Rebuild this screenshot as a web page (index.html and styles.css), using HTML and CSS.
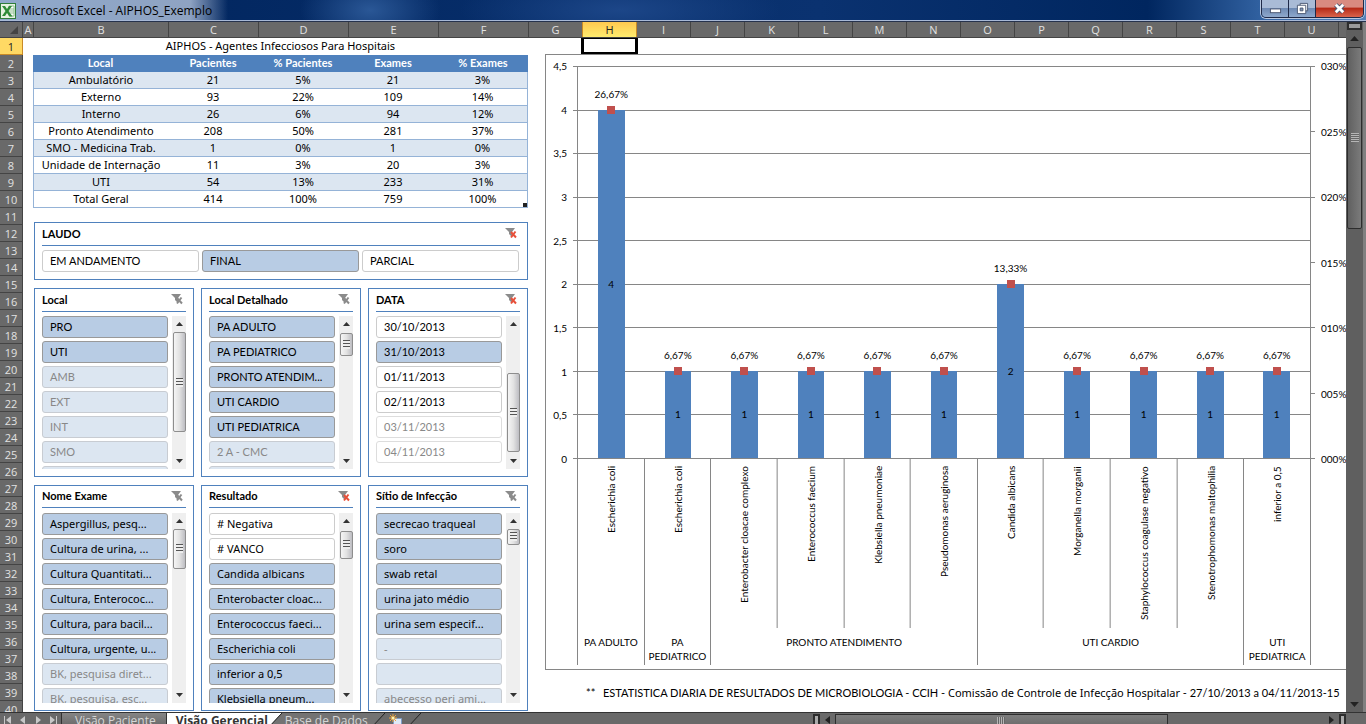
FILE: index.html
```html
<!DOCTYPE html>
<html lang="pt-BR">
<head>
<meta charset="utf-8">
<title>Microsoft Excel - AIPHOS_Exemplo</title>
<link rel="stylesheet" href="styles.css">
</head>
<body>
<svg class="defs" aria-hidden="true">
  <symbol id="clear" viewBox="0 0 12 12">
    <path class="funnel" d="M0 1h10L7 5v5L4 7V5z"/>
    <path class="cross" d="M6 5l5 5.500M10.500 4.500l-4.500 6"/>
  </symbol>
  <symbol id="up" viewBox="0 0 7 4"><path d="M0 4L3.500 0L7 4z"/></symbol>
  <symbol id="down" viewBox="0 0 7 4"><path d="M0 0L3.500 4L7 0z"/></symbol>
</svg>
<div class="app">
  <header class="titlebar">
    <svg class="logo" viewBox="0 0 16 16"><rect x=".5" y=".5" width="15" height="15" fill="#e6f2e2" stroke="#2f7d3b"/><path d="M9 3h5v10H9z" fill="#fff" stroke="#8dbf8f"/><path d="M10 6h4M10 8h4M10 10h4" stroke="#8dbf8f"/><path d="M2 3h3l2 3 2-3h3L8.500 8l4 5.500h-3L7 10l-2 3H2l3.500-5z" fill="#2e8b37"/></svg>
    <h1 class="title">Microsoft Excel - AIPHOS_Exemplo</h1>
    <div class="winbtns">
      <button class="win" aria-label="Minimizar"><svg viewBox="0 0 14 14"><rect x="1.500" y="7.500" width="11" height="4" fill="#fff" stroke="#4a5670"/></svg></button>
      <button class="win" aria-label="Restaurar"><svg viewBox="0 0 14 14"><path d="M4.500 1.500h8v8h-8z" fill="#fff" stroke="#4a5670"/><path d="M1.500 3.500h9v9h-9z" fill="#fff" stroke="#4a5670"/><path d="M4.500 6.500h3v3h-3z" fill="#8397b5" stroke="#4a5670"/></svg></button>
      <button class="win close" aria-label="Fechar"><svg viewBox="0 0 14 14"><path d="M3 3l8 8M11 3l-8 8" stroke="#4a5670" stroke-width="5"/><path d="M3 3l8 8M11 3l-8 8" stroke="#fff" stroke-width="3"/></svg></button>
    </div>
  </header>

  <div class="workbook">
    <main class="sheet">
      <div class="colheads">
        <button class="corner" aria-label="Selecionar tudo"><svg viewBox="0 0 8 8"><path d="M8 0v8H0z" fill="#444"/></svg></button>
        <span class="ca">A</span><span class="cb">B</span><span class="cc">C</span><span class="cc">D</span><span class="cc">E</span><span class="cc">F</span><span>G</span><span class="on">H</span><span>I</span><span>J</span><span>K</span><span>L</span><span>M</span><span>N</span><span>O</span><span>P</span><span>Q</span><span>R</span><span>S</span><span>T</span><span>U</span><span></span>
      </div>
      <div class="sheetbody">
        <div class="rowheads">
          <span class="on">1</span><span>2</span><span>3</span><span>4</span><span>5</span><span>6</span><span>7</span><span>8</span><span>9</span><span>10</span><span>11</span><span>12</span><span>13</span><span>14</span><span>15</span><span>16</span><span>17</span><span>18</span><span>19</span><span>20</span><span>21</span><span>22</span><span>23</span><span>24</span><span>25</span><span>26</span><span>27</span><span>28</span><span>29</span><span>30</span><span>31</span><span>32</span><span>33</span><span>34</span><span>35</span><span>36</span><span>37</span><span>38</span><span>39</span><span>40</span>
        </div>
        <section class="left">
          <table class="data">
            <caption>AIPHOS - Agentes Infecciosos Para Hospitais</caption>
            <thead><tr><th class="wide">Local</th><th>Pacientes</th><th>% Pacientes</th><th>Exames</th><th>% Exames</th></tr></thead>
            <tbody>
              <tr><td>Ambulatório</td><td>21</td><td>5%</td><td>21</td><td>3%</td></tr>
              <tr><td>Externo</td><td>93</td><td>22%</td><td>109</td><td>14%</td></tr>
              <tr><td>Interno</td><td>26</td><td>6%</td><td>94</td><td>12%</td></tr>
              <tr><td>Pronto Atendimento</td><td>208</td><td>50%</td><td>281</td><td>37%</td></tr>
              <tr><td>SMO - Medicina Trab.</td><td>1</td><td>0%</td><td>1</td><td>0%</td></tr>
              <tr><td>Unidade de Internação</td><td>11</td><td>3%</td><td>20</td><td>3%</td></tr>
              <tr><td>UTI</td><td>54</td><td>13%</td><td>233</td><td>31%</td></tr>
              <tr><td>Total Geral</td><td>414</td><td>100%</td><td>759</td><td class="last">100%</td></tr>
            </tbody>
          </table>

          <div class="slicers">
            <section class="slicer full">
              <header><h2>LAUDO</h2><button class="clr red" aria-label="Limpar filtro"><svg><use href="#clear"/></svg></button></header>
              <div class="row"><button class="it off">EM ANDAMENTO</button><button class="it">FINAL</button><button class="it off">PARCIAL</button></div>
            </section>

            <section class="slicer mid">
              <header><h2>Local</h2><button class="clr" aria-label="Limpar filtro"><svg><use href="#clear"/></svg></button></header>
              <div class="list"><div class="items"><button class="it">PRO</button><button class="it">UTI</button><button class="it dim">AMB</button><button class="it dim">EXT</button><button class="it dim">INT</button><button class="it dim">SMO</button><button class="it dim"></button></div>
              <div class="bar"><svg><use href="#up"/></svg><div class="track"><i class="thumb" style="top:0%;height:83%"></i></div><svg><use href="#down"/></svg></div></div>
            </section>
            <section class="slicer mid">
              <header><h2>Local Detalhado</h2><button class="clr" aria-label="Limpar filtro"><svg><use href="#clear"/></svg></button></header>
              <div class="list"><div class="items"><button class="it">PA ADULTO</button><button class="it">PA PEDIATRICO</button><button class="it">PRONTO ATENDIM...</button><button class="it">UTI CARDIO</button><button class="it">UTI PEDIATRICA</button><button class="it dim">2 A - CMC</button><button class="it dim"></button></div>
              <div class="bar"><svg><use href="#up"/></svg><div class="track"><i class="thumb" style="top:1%;height:19%"></i></div><svg><use href="#down"/></svg></div></div>
            </section>
            <section class="slicer mid">
              <header><h2>DATA</h2><button class="clr red" aria-label="Limpar filtro"><svg><use href="#clear"/></svg></button></header>
              <div class="list"><div class="items"><button class="it off">30/10/2013</button><button class="it">31/10/2013</button><button class="it off">01/11/2013</button><button class="it off">02/11/2013</button><button class="it off faint">03/11/2013</button><button class="it off faint">04/11/2013</button></div>
              <div class="bar"><svg><use href="#up"/></svg><div class="track"><i class="thumb" style="top:34%;height:65%"></i></div><svg><use href="#down"/></svg></div></div>
            </section>

            <section class="slicer low">
              <header><h2>Nome Exame</h2><button class="clr" aria-label="Limpar filtro"><svg><use href="#clear"/></svg></button></header>
              <div class="list"><div class="items"><button class="it">Aspergillus, pesq...</button><button class="it">Cultura de urina, ...</button><button class="it">Cultura Quantitati...</button><button class="it">Cultura, Enterococ...</button><button class="it">Cultura, para bacil...</button><button class="it">Cultura, urgente, u...</button><button class="it dim">BK, pesquisa diret...</button><button class="it dim">BK, pesquisa, esc...</button></div>
              <div class="bar"><svg><use href="#up"/></svg><div class="track"><i class="thumb" style="top:0%;height:25%"></i></div><svg><use href="#down"/></svg></div></div>
            </section>
            <section class="slicer low">
              <header><h2>Resultado</h2><button class="clr red" aria-label="Limpar filtro"><svg><use href="#clear"/></svg></button></header>
              <div class="list"><div class="items"><button class="it off"># Negativa</button><button class="it off"># VANCO</button><button class="it">Candida albicans</button><button class="it">Enterobacter cloac...</button><button class="it">Enterococcus faeci...</button><button class="it">Escherichia coli</button><button class="it">inferior a 0,5</button><button class="it">Klebsiella pneum...</button></div>
              <div class="bar"><svg><use href="#up"/></svg><div class="track"><i class="thumb" style="top:1%;height:18%"></i></div><svg><use href="#down"/></svg></div></div>
            </section>
            <section class="slicer low">
              <header><h2>Sítio de Infecção</h2><button class="clr" aria-label="Limpar filtro"><svg><use href="#clear"/></svg></button></header>
              <div class="list"><div class="items"><button class="it">secrecao traqueal</button><button class="it">soro</button><button class="it">swab retal</button><button class="it">urina jato médio</button><button class="it">urina sem especif...</button><button class="it dim">-</button><button class="it dim"></button><button class="it dim">abecesso peri ami...</button></div>
              <div class="bar"><svg><use href="#up"/></svg><div class="track"><i class="thumb" style="top:0%;height:10%"></i></div><svg><use href="#down"/></svg></div></div>
            </section>
          </div>
        </section>

        <section class="right">
          <div class="cellrow"><div class="selected"></div></div>
          <div class="chart">
            <div class="axis yl"><span>4,5</span><span>4</span><span>3,5</span><span>3</span><span>2,5</span><span>2</span><span>1,5</span><span>1</span><span>0,5</span><span>0</span></div>
            <div class="plot">
              <div class="lines"><i></i><i></i><i></i><i></i><i></i><i></i><i></i><i></i><i></i><i></i></div>
              <div class="ticks"><i></i><i></i><i></i><i></i><i></i><i></i><i></i></div>
              <div class="col"><span class="pct">26,67%</span><div class="val" style="height:88.890%">4</div></div>
              <div class="col"><span class="pct">6,67%</span><div class="val" style="height:22.220%">1</div></div>
              <div class="col"><span class="pct">6,67%</span><div class="val" style="height:22.220%">1</div></div>
              <div class="col"><span class="pct">6,67%</span><div class="val" style="height:22.220%">1</div></div>
              <div class="col"><span class="pct">6,67%</span><div class="val" style="height:22.220%">1</div></div>
              <div class="col"><span class="pct">6,67%</span><div class="val" style="height:22.220%">1</div></div>
              <div class="col"><span class="pct">13,33%</span><div class="val" style="height:44.440%">2</div></div>
              <div class="col"><span class="pct">6,67%</span><div class="val" style="height:22.220%">1</div></div>
              <div class="col"><span class="pct">6,67%</span><div class="val" style="height:22.220%">1</div></div>
              <div class="col"><span class="pct">6,67%</span><div class="val" style="height:22.220%">1</div></div>
              <div class="col"><span class="pct">6,67%</span><div class="val" style="height:22.220%">1</div></div>
            </div>
            <div class="axis yr"><span>030%</span><span>025%</span><span>020%</span><span>015%</span><span>010%</span><span>005%</span><span>000%</span></div>
            <div class="cats">
              <div class="group one"><div class="names"><span>Escherichia coli</span></div><b>PA ADULTO</b></div>
              <div class="group one"><div class="names"><span>Escherichia coli</span></div><b>PA<br>PEDIATRICO</b></div>
              <div class="group four"><div class="names"><span>Enterobacter cloacae complexo</span><span>Enterococcus faecium</span><span>Klebsiella pneumoniae</span><span>Pseudomonas aeruginosa</span></div><b>PRONTO ATENDIMENTO</b></div>
              <div class="group four"><div class="names"><span>Candida albicans</span><span>Morganella morganii</span><span>Staphylococcus coagulase negativo</span><span>Stenotrophomonas maltophilia</span></div><b>UTI CARDIO</b></div>
              <div class="group one"><div class="names"><span>inferior a 0,5</span></div><b>UTI<br>PEDIATRICA</b></div>
            </div>
          </div>
          <p class="note"><span class="mark">**</span>ESTATISTICA DIARIA DE RESULTADOS DE MICROBIOLOGIA - CCIH - <span class="text">Comissão de Controle de Infecção Hospitalar</span> - 27/10/2013 a 04/11/2013-15</p>
        </section>
      </div>
    </main>
    <div class="vscroll">
      <i class="split"></i>
      <svg class="arrow"><use href="#up"/></svg>
      <div class="vtrack"><i class="vthumb"></i></div>
      <svg class="arrow"><use href="#down"/></svg>
    </div>
  </div>

  <footer class="tabbar">
    <div class="nav">
      <button aria-label="Primeira"><svg viewBox="0 0 8 8"><path d="M0 0h1v8H0zM7 0v8L2 4z"/></svg></button>
      <button aria-label="Anterior"><svg viewBox="0 0 8 8"><path d="M6 0v8L1 4z"/></svg></button>
      <button aria-label="Próxima"><svg viewBox="0 0 8 8"><path d="M2 0v8l5-4z"/></svg></button>
      <button aria-label="Última"><svg viewBox="0 0 8 8"><path d="M1 0v8l5-4zM7 0h1v8H7z"/></svg></button>
    </div>
    <button class="tab">Visão Paciente</button>
    <button class="tab active">Visão Gerencial</button>
    <svg class="slant" viewBox="0 0 14 15"><path d="M0 0h14L0 15z" fill="#fff"/><path d="M14 0L0 15h14z" fill="#737373"/><path d="M14 0L0 15" stroke="#222"/></svg>
    <button class="tab">Base de Dados</button>
    <svg class="slant" viewBox="0 0 14 15"><path d="M0 0h14L0 15z" fill="#737373"/><path d="M14 0L0 15" stroke="#222"/></svg>
    <button class="new" aria-label="Inserir planilha"><svg viewBox="0 0 14 14"><path d="M4.500 4.500h8v7h-8z" fill="#dfe9f7" stroke="#7f9dc8"/><path d="M4 0v8M0 4h8M1 1l6 6M7 1L1 7" stroke="#f0a437"/><circle cx="4" cy="4" r="1.500" fill="#fff2b0"/></svg></button>
    <svg class="slant" viewBox="0 0 14 15"><path d="M14 0L0 15" stroke="#222"/></svg>
    <div class="hscroll">
      <i class="hsplit"></i>
      <svg class="harrow" viewBox="0 0 5 8"><path d="M5 0v8L0 4z"/></svg>
      <div class="htrack"><i class="hthumb"></i></div>
      <svg class="harrow" viewBox="0 0 5 8"><path d="M0 0v8l5-4z"/></svg>
      <i class="hsplit"></i>
    </div>
  </footer>
</div>
</body>
</html>
```
FILE: styles.css
```css
* { box-sizing: border-box; }
body { margin: 0; font-family: Lato, "Open Sans", sans-serif; font-size: 11px; color: #000; }
button { font: inherit; color: inherit; margin: 0; padding: 0; border: 0; background: none; }
h1, h2, p { margin: 0; font-size: inherit; }
.defs { position: absolute; width: 0; height: 0; }
.app { height: 100vh; overflow: hidden; display: flex; flex-direction: column; background: #696969; }

/* Title bar */
.titlebar {
  flex: 0 0 22px; display: flex; align-items: center; padding: 0 2px 0 0; gap: 5px;
  border-bottom: 1px solid #26324c; box-shadow: inset 0 -1px #a7b8d6;
  background:
    linear-gradient(90deg, #8fa9cb 0, #8fa3c2 190px, rgba(120,145,185,0) 228px),
    radial-gradient(ellipse 70px 40px at 370px 10px, #2a5796, rgba(20,60,120,0)),
    radial-gradient(ellipse 160px 40px at 620px 10px, #1c4688, rgba(20,60,120,0)),
    linear-gradient(90deg, #00245c 0, #0a3270 60%, #00265f 84%, #3566a6 93%, #5480b8 100%);
}
.logo { width: 16px; height: 16px; }
.title { flex: 1; font: 12px/20px "Open Sans", sans-serif; }
.winbtns { display: flex; align-self: flex-start; height: 18px; border: 1px solid #1f2a48; border-top: 0; border-radius: 0 0 5px 5px; overflow: hidden; box-shadow: 0 0 0 1px #b8c8e0; }
.win { width: 27px; display: flex; align-items: center; justify-content: center; border-right: 1px solid #1f2a48; background: linear-gradient(#a9bbd6 0 45%, #6f8bb4 50%, #8ea8cc); }
.win svg { width: 13px; height: 13px; }
.close { width: 47px; border: 0; background: linear-gradient(#d98b80 0 40%, #b72c19 50%, #d9644c); }

/* Headings of the grid */
.workbook { flex: 1; min-height: 0; display: flex; }
.sheet { flex: 1; min-width: 0; display: flex; flex-direction: column; background: #fff; }
.colheads { flex: 0 0 16px; display: flex; overflow: hidden; background: #696969; border-bottom: 1px solid #444; font: 11px/15px "Open Sans", sans-serif; color: #e2e2e2; }
.colheads span { flex: 0 0 54px; text-align: center; border-right: 1px solid #444; }
.colheads .corner { flex: 0 0 23px; display: flex; align-items: flex-end; justify-content: flex-end; padding: 0 4px 3px 0; border-right: 1px solid #444; }
.corner svg { width: 8px; height: 8px; }
.colheads .ca { flex-basis: 11px; }
.colheads .cb { flex-basis: 135px; }
.colheads .cc { flex-basis: 90px; }
.colheads .on, .rowheads .on { background: #ffd964; color: #222; border-color: #c98a26; }
.colheads .on { box-shadow: -1px 0 #c98a26; background: linear-gradient(#ffc84f, #ffec6e); }
.sheetbody { flex: 1; min-height: 0; display: flex; overflow: hidden; }
.rowheads { flex: 0 0 23px; background: #696969; font: 11px/17px "Open Sans", sans-serif; color: #e2e2e2; text-align: center; }
.rowheads span { display: block; height: 17px; border-bottom: 1px solid #444; border-right: 1px solid #444; }

/* Table */
.left { flex: 0 0 505px; padding-left: 10px; }
.data { width: 100%; table-layout: fixed; border-collapse: separate; border-spacing: 0; text-align: center; line-height: 16px; font-family: "Noto Sans", sans-serif; }
.data caption { height: 17px; line-height: 16px; }
.data th, .data td { padding: 0; height: 17px; border-bottom: 1px solid #95b3d7; white-space: nowrap; }
.data th { background: #4f81bd; color: #fff; border-color: #4f81bd; font-family: Lato, sans-serif; }
.data .wide { width: 135px; }
.data td:first-child { border-left: 1px solid #95b3d7; }
.data td:last-child { border-right: 1px solid #95b3d7; }
.data tbody tr:nth-child(odd) { background: #dce6f1; }
.data .last { background: linear-gradient(#222, #222) right bottom / 4px 4px no-repeat; }

/* Slicers */
.slicers { display: grid; grid-template-columns: repeat(3, 1fr); column-gap: 7px; row-gap: 8px; padding: 14px 0 0 1px; }
.slicer { border: 1px solid #4f81bd; padding: 0 7px 7px; min-width: 0; }
.full { grid-column: 1 / -1; }
.slicer header { display: flex; justify-content: space-between; align-items: center; height: 23px; border-bottom: 1px solid #4f81bd; margin-bottom: 4px; padding: 0 3px 2px 0; }
.low header { height: 22px; margin-bottom: 5px; }
.slicer h2 { font-weight: 700; }
.clr { width: 12px; height: 12px; display: flex; --x: #8b8b8b; }
.clr svg { width: 12px; height: 12px; }
.clr.red { --x: #e8503a; }
.funnel { fill: #8b8b8b; }
.cross { stroke: var(--x); stroke-width: 2; fill: none; }
.row { display: grid; grid-template-columns: repeat(3, 1fr); gap: 3px; }
.full .row { padding-right: 1px; }
.list { display: flex; gap: 4px; height: 153px; overflow: hidden; }
.low .list { height: 190px; }
.items { flex: 1; min-width: 0; display: flex; flex-direction: column; gap: 3px; }
.it { flex: 0 0 22px; height: 22px; padding: 0 7px 2px; text-align: left; white-space: nowrap; overflow: hidden; border: 1px solid #999; border-radius: 3px; background: #b8cce4; }
.it.off { background: #fff; border-color: #ccc; }
.it.dim { background: #dce6f1; border-color: #c8ccd2; color: #888; }
.it.faint { color: #888; border-color: #ddd; }
.low .it { font-family: "Noto Sans", sans-serif; }
.bar { flex: 0 0 14px; display: flex; flex-direction: column; align-items: center; background: #efefef; padding: 6px 0; gap: 6px; }
.bar svg { width: 7px; height: 4px; fill: #333; }
.track { flex: 1; width: 13px; position: relative; }
.thumb { position: absolute; left: 0; right: 0; border: 1px solid #8e8e8e; border-radius: 2px; background: repeating-linear-gradient(#555 0 1px, #eee 1px 3px) center / 7px 9px no-repeat, linear-gradient(90deg, #f5f5f5, #e2e2e2 50%, #bdbdc2); }

/* Chart */
.right { flex: 1; min-width: 0; margin-left: 17px; overflow: hidden; }
.cellrow { height: 16px; padding-left: 36px; }
.selected { width: 57px; height: 16px; border: 2px solid #000; border-width: 1px 3px 2px; }
.chart { display: grid; grid-template-columns: 31px 1fr 35px; grid-template-rows: 409px 206px; border: 1px solid #868686; border-right: 0; height: 616px; font-size: 10px; }
.axis { display: flex; flex-direction: column; justify-content: space-between; line-height: 14px; height: 407px; margin-top: 4px; }
.yl { text-align: right; padding-right: 10px; }
.yr { padding-left: 10px; white-space: nowrap; }
.plot { position: relative; display: flex; height: 393px; margin-top: 11px; border-left: 1px solid #868686; border-right: 1px solid #868686; }
.lines, .ticks { position: absolute; top: 0; bottom: 0; display: flex; flex-direction: column; justify-content: space-between; }
.lines { left: -5px; right: 0; }
.ticks { left: 100%; width: 5px; }
.lines i, .ticks i { height: 1px; background: #868686; }
.col { flex: 1; position: relative; display: flex; flex-direction: column; justify-content: flex-end; align-items: center; padding-bottom: 1px; }
.pct { line-height: 14px; margin-bottom: 9px; }
.val { position: relative; flex: none; width: 40%; background: #4f81bd; display: flex; align-items: center; justify-content: center; }
.val::before { content: ""; position: absolute; top: -4px; left: calc(50% - 4px); width: 8px; height: 8px; background: #c0504d; }
.cats { grid-column: 2; display: grid; grid-template-columns: repeat(11, 1fr); align-self: start; margin-top: -5px; height: 206px; border-right: 1px solid #868686; }
.group { border-left: 1px solid #868686; min-width: 0; }
.group.four { grid-column: span 4; }
.group b { display: block; font-weight: 400; text-align: center; line-height: 14px; padding-top: 7px; white-space: nowrap; }
.names { display: flex; height: 169px; }
.names span { flex: 1; writing-mode: vertical-rl; transform: rotate(180deg); display: flex; align-items: center; justify-content: flex-end; white-space: nowrap; padding-bottom: 7px; border-right: 0 solid #868686; }
.names span + span { border-right-width: 1px; }
.note { line-height: 16px; white-space: nowrap; margin-top: 15px; padding-left: 41px; }
.note .mark { display: inline-block; width: 17px; }
.note .text { font-family: "Noto Sans", sans-serif; }

/* Window scroll bars */
.vscroll { flex: 0 0 20px; display: flex; flex-direction: column; align-items: center; gap: 6px; background: #5f5f5f; border-right: 3px solid #808080; padding-bottom: 5px; }
.split { width: 15px; height: 8px; border: 2px solid #2d2d2d; background: #9a9a9a; }
.arrow { width: 9px; height: 5px; fill: #222; }
.vtrack { flex: 1; width: 15px; }
.vthumb { display: block; height: 28%; border: 1px solid #2d2d2d; border-radius: 2px; background: repeating-linear-gradient(#b5b5b5 0 1px, #666 1px 2px) center / 8px 9px no-repeat, linear-gradient(90deg, #606060, #7b7b7b); }

/* Sheet tabs */
.tabbar { flex: 0 0 12px; display: flex; align-items: flex-start; overflow: hidden; background: #696969; border-top: 1px solid #333; font: 12px/15px "Open Sans", sans-serif; color: #d6d6d6; }
.nav { flex: 0 0 62px; display: flex; justify-content: space-around; padding-top: 3px; border-right: 1px solid #333; }
.nav button { display: flex; }
.nav svg { width: 8px; height: 8px; fill: #c8c8c8; }
.tab { height: 15px; padding: 0 10px 0 13px; background: linear-gradient(#858585, #666); border-right: 1px solid #333; }
.tab.active { background: #fff; color: #333; font-weight: 700; padding: 0 0 0 9px; border: 0; }
.slant { flex: none; width: 14px; height: 15px; }
.slant + .tab { padding: 0 3px; border: 0; background: #737373; }
.new { display: flex; margin: 1px 4px 0; }
.new svg { width: 14px; height: 14px; }
.hscroll { margin-left: auto; flex: 0 0 39%; margin-right: 20px; display: flex; gap: 5px; padding-top: 1px; }
.hsplit { flex: 0 0 7px; height: 14px; border: 2px solid #2d2d2d; background: #aaa; }
.harrow { flex: none; width: 5px; height: 8px; margin-top: 2px; fill: #222; }
.htrack { flex: 1; }
.hthumb { display: block; width: 68%; height: 15px; border: 1px solid #2d2d2d; background: repeating-linear-gradient(90deg, #b5b5b5 0 1px, #666 1px 2px) center 2px / 8px 8px no-repeat, linear-gradient(#7d7d7d, #686868); }
```
